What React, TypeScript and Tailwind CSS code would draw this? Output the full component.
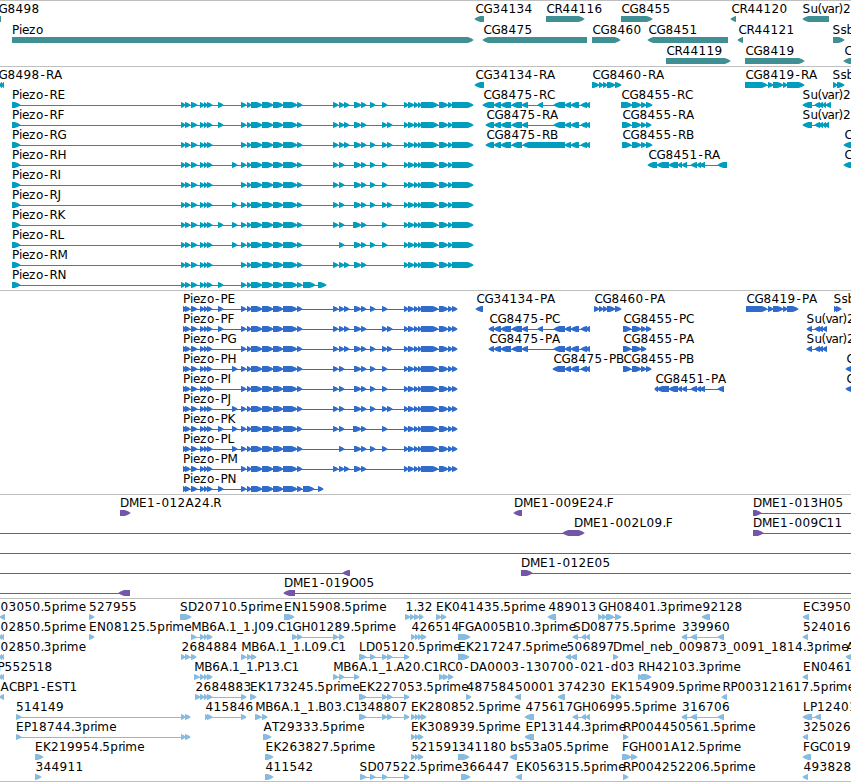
import React from "react";

type Dir = "r" | "l";
/** row, label, label x, direction, exon spans, optional connector span */
type Feature = [number, string, number, Dir, string, string?];

interface TrackData {
  color: string;
  height: string;
  pitch: number;
  features: Feature[];
}

// Horizontal advance of each character, in pixels, for the 12px label face.
const ADVANCE: Record<string, number> = {
  A: 8.5, B: 8, C: 8, D: 9, E: 8, F: 7, G: 9, H: 9, J: 4, I: 4, K: 8, L: 7, M: 10, N: 9, O: 9, P: 7,
  R: 8, S: 8, T: 7, a: 7, b: 8, d: 8, e: 7, i: 3, l: 3, m: 12, n: 8, o: 7, p: 8, r: 4, s: 6, u: 7,
  v: 6, z: 7, "(": 4, ")": 4.5, "-": 6.5, "_": 6, ".": 3.3,
};

function glyphPositions(text: string, x: number): string {
  let pos = x + 0.4;
  return text
    .split("")
    .map((ch) => {
      const here = pos;
      pos += ADVANCE[ch] ?? 8;
      return ch === "-" ? here + 1 : here;
    })
    .join(" ");
}

const parse = (spans: string): number[][] =>
  spans.split(" ").filter(Boolean).map((s) => s.split(":").map(Number));

// Block arrow six pixels high, with a slightly convex head.
function arrow(a: number, b: number, top: number, dir: Dir): string {
  const head = Math.min(b - a + 0.5, 6);
  const mid = top + 3;
  const bottom = top + 6;
  const sign = dir === "r" ? 1 : -1;
  const back = dir === "r" ? a : b;
  const tip = dir === "r" ? b + 0.8 : a - 0.8;
  const neck = tip - sign * head;
  const shoulder = tip - sign * head * 0.45;
  return `M${back} ${top}H${neck}L${shoulder} ${top + 1.3}L${tip} ${mid}L${shoulder} ${bottom - 1.3}L${neck} ${bottom}H${back}Z`;
}

function Glyph({ feature, pitch }: { feature: Feature; pitch: number }) {
  const [row, label, x, dir, spans, link] = feature;
  const top = row * pitch + 15;
  const exons = parse(spans);
  const connector = link
    ? parse(link)[0]
    : exons.length > 1
      ? [exons[0][0], exons[exons.length - 1][1]]
      : null;
  return (
    <g>
      {connector && (
        <rect x={connector[0]} y={top + 3} width={connector[1] - connector[0]} height={1} shapeRendering="crispEdges" />
      )}
      {exons.length > 0 && <path d={exons.map(([a, b]) => arrow(a, b, top, dir)).join("")} />}
      {label && (
        <text x={glyphPositions(label, x)} y={top - 3} className="fill-black">
          {label}
        </text>
      )}
    </g>
  );
}

function Track({ data }: { data: TrackData }) {
  return (
    <section className={`w-full shrink-0 overflow-hidden border-t border-[#bfbfbf] ${data.height}`}>
      <svg
        className={`block h-full w-full font-['DejaVu_Sans',sans-serif] text-[12px] ${data.color}`}
      >
        {data.features.map((f, i) => (
          <Glyph key={i} feature={f} pitch={data.pitch} />
        ))}
      </svg>
    </section>
  );
}

const genes: Feature[] = [
  [0, "CG8498", -10, "l", "-9:1"],
  [0, "CG34134", 475, "l", "475:484"],
  [0, "CR44116", 546, "r", "546:584"],
  [0, "CG8455", 621, "r", "621:652"],
  [0, "CR44120", 731, "l", "731:736"],
  [0, "Su(var)2", 802, "l", "803:829"],
  [1, "Piezo", 11.6, "r", "12:473"],
  [1, "CG8475", 483, "l", "483:587"],
  [1, "CG8460", 592, "r", "592:620"],
  [1, "CG8451", 648, "l", "648:728"],
  [1, "CR44121", 738, "l", "738:743"],
  [1, "Ssb", 832, "r", "833:844"],
  [2, "CR44119", 666, "r", "666:730"],
  [2, "CG8419", 745, "r", "745:804"],
  [2, "C", 844, "l", "844:860"],
];

// Exons shared by every Piezo isoform, then the alternative ones per isoform.
const FIRST = "191:197 200:204 204:207 207:212";
const CORE = "241:246 247:251 251:262 262:273 273:283 283:297 297:302";
const TAIL = "404:408 408:414 414:418 418:421 421:438 439:448 448:452";
const isoforms: [string, string, string][] = [
  ["E", "218:223", "333:338 339:344 344:349 354:361 361:366 370:375 382:387"],
  ["F", "218:223", "333:338 339:344 344:349 354:361 361:366 382:387 387:392"],
  ["G", "", "333:338 339:344 344:349 354:361 361:366 370:375 382:387 387:392"],
  ["H", "232:237", "333:338 339:344 354:361 361:366 370:375 382:387"],
  ["I", "", "333:338 339:344 354:361 361:366 370:375 382:387"],
  ["J", "232:237", "333:338 339:344 354:361 361:366 370:375 382:387 387:392"],
  ["K", "218:223 232:237", "333:338 339:344 353:361 361:366 382:387"],
  ["L", "232:237", "339:344 354:361 361:366 370:375 382:387"],
  ["M", "", "333:338 339:344 344:349 354:361 361:366"],
];

const piezoR: Feature[] = isoforms.map(([n, a, b], i) => [
  i + 1, `Piezo-R${n}`, 11.6, "r", `12:20 181:185 185:190 ${FIRST} ${a} ${CORE} ${b} ${TAIL} 452:473`,
]);
const piezoP: Feature[] = isoforms.map(([n, a, b], i) => [
  i, `Piezo-P${n}`, 182.6, "r", `183:186 185:190 ${FIRST} ${a} ${CORE} ${b} ${TAIL} 452:457`,
]);

const C8475 = "494:501 501:511 512:522";
const C8475_END = "565:571 571:579 581:587 586:590";
const C8451 = "657:669 669:678 678:682 682:687 691:697 697:701 700:705";

const transcripts: Feature[] = [
  [0, "CG8498-RA", -10, "l", "0:2 2:4"],
  [0, "CG34134-RA", 475, "l", "475:484"],
  [0, "CG8460-RA", 592, "r", "592:599 599:603 603:607 607:615 615:621"],
  [0, "CG8419-RA", 745, "r", "745:767 768:773 773:783 783:787 787:804"],
  [0, "Ssb", 832, "r", "833:837 837:844"],
  ...piezoR,
  [10, "Piezo-RN", 11.6, "r", `12:20 181:185 185:190 ${FIRST} 218:223 ${CORE} 303:315 318:326`],
  [1, "CG8475-RC", 483, "l", `483:494 ${C8475} 522:528 538:543 554:565 ${C8475_END}`],
  [2, "CG8475-RA", 486, "l", `486:494 ${C8475} 522:528 554:565 ${C8475_END}`],
  [3, "CG8475-RB", 486, "l", `486:494 ${C8475} 523:565 ${C8475_END}`],
  [1, "CG8455-RC", 621, "r", "621:632 632:641 641:646 646:652"],
  [2, "CG8455-RA", 622, "r", "622:631 632:641 641:646 646:651"],
  [3, "CG8455-RB", 622, "r", "622:631 632:641 641:646 646:652"],
  [4, "CG8451-RA", 648, "l", `648:657 ${C8451} 718:727`],
  [1, "Su(var)2", 802, "l", "803:812 815:820 819:823 823:826 826:831"],
  [2, "Su(var)2", 802, "l", "803:812 815:820 819:823 823:826 825:829"],
  [3, "C", 844, "l", "844:860"],
  [4, "C", 844, "l", "844:860"],
];

const proteins: Feature[] = [
  ...piezoP,
  [9, "Piezo-PN", 182.6, "r", `183:186 185:190 ${FIRST} 218:223 ${CORE} 303:314 318:323`],
  [0, "CG34134-PA", 476, "l", "476:483"],
  [0, "CG8460-PA", 594, "r", "594:599 599:603 603:607 607:615 615:621"],
  [0, "CG8419-PA", 746, "r", "746:767 768:773 773:783 783:787 787:798"],
  [0, "Ssb", 833, "r", "834:837 836:841"],
  [1, "CG8475-PC", 489, "l", `489:494 ${C8475} 522:528 538:543 554:565 ${C8475_END}`],
  [2, "CG8475-PA", 489, "l", `489:494 ${C8475} 522:528 554:565 ${C8475_END}`],
  [3, "CG8475-PB", 553, "l", `553:565 ${C8475_END}`],
  [1, "CG8455-PC", 623, "r", "623:631 632:641 641:646 646:651"],
  [2, "CG8455-PA", 623, "r", "623:631 632:641 641:646"],
  [3, "CG8455-PB", 623, "r", "623:631 632:641 641:646 646:651"],
  [4, "CG8451-PA", 655, "l", `655:658 ${C8451} 718:724`],
  [1, "Su(var)2", 806, "l", "807:812 815:820 819:823 823:827"],
  [2, "Su(var)2", 806, "l", "807:812 815:820 819:823 823:827"],
  [3, "C", 846, "l", "846:860"],
  [4, "C", 846, "l", "846:860"],
];

const clones: Feature[] = [
  [0, "DME1-012A24.R", 119.6, "r", "120:130"],
  [0, "DME1-009E24.F", 513.6, "l", "514:522"],
  [0, "DME1-013H05", 752.6, "r", "753:761", "753:851"],
  [1, "DME1-002L09.F", 573.6, "r", "573:584"],
  [1, "", 0, "l", "563:573", "0:573"],
  [1, "DME1-009C11", 752.6, "r", "753:763", "753:851"],
  [2, "", 0, "r", "", "0:851"],
  [3, "", 0, "l", "343:350", "0:350"],
  [3, "DME1-012E05", 520.6, "r", "521:532", "521:851"],
  [4, "", 0, "l", "119:130", "0:130"],
  [4, "DME1-019O05", 283.6, "l", "284:295", "284:851"],
];

const DOUBLE_END = "181:185 185:190";
const TRIPLE = "200:204 204:207 207:212";
const QUAD = "411:415 415:418 418:421 421:426";
const LONG = "359:366 382:387 387:392 404:409";

const ests: Feature[] = [
  [0, "03050.5prime", 0, "l", "0:5"],
  [0, "527955", 88.5, "r", "89:94"],
  [0, "SD20710.5prime", 179.5, "r", "180:191"],
  [0, "EN15908.5prime", 283.5, "r", "284:294"],
  [0, "1.32", 405, "r", "405:410 410:414 414:419 419:423"],
  [0, "EK041435.5prime", 435.5, "r", "436:441 441:446"],
  [0, "489013", 548, "l", "548:556"],
  [0, "GH08401.3prime", 598, "r", "598:602 602:606 606:614 615:621"],
  [0, "92128", 702, "l", "702:710"],
  [0, "EC3950", 802.5, "l", "803:809"],
  [1, "02850.5prime", 0, "l", "0:2 2:4"],
  [1, "EN08125.5prime", 88.5, "r", "89:94"],
  [1, "MB6A.1_1.J09.C1", 190.8, "r", `191:196 ${TRIPLE}`],
  [1, "GH01289.5prime", 292, "r", "292:297 297:302 333:338 339:344"],
  [1, "426514", 411, "r", QUAD],
  [1, "FGA005B10.3prime", 457.5, "r", "458:470"],
  [1, "SD08775.5prime", 572.5, "l", "573:578 582:586 586:590"],
  [1, "339960", 681.5, "l", "682:687 691:697 718:724"],
  [1, "524016", 802.5, "l", "803:808"],
  [2, "02850.3prime", 0, "l", "0:2 2:4"],
  [2, "2684884", 181, "r", `${DOUBLE_END} 191:196`],
  [2, "MB6A.1_1.L09.C1", 240.8, "r", "241:246 247:251 251:256"],
  [2, "LD05120.5prime", 358.5, "r", "359:366 370:375 382:387 387:392 404:409"],
  [2, "EK217247.5prime", 457.5, "r", "458:469"],
  [2, "506897", 566, "l", "566:571 571:577"],
  [2, "Dmel_neb_009873_0091_1814.3prime", 612.5, "r", "613:618"],
  [2, "A", 845.8, "l", "846:853"],
  [3, "P552518", -3, "l", "0:2 2:4"],
  [3, "MB6A.1_1.P13.C1", 193.8, "r", `194:199 ${TRIPLE}`],
  [3, "MB6A.1_1.A20.C1", 332.8, "r", "333:338 339:344 354:359"],
  [3, "RC0-DA0003-130700-021-d03", 438.8, "r", "439:444 443:448 448:453"],
  [3, "RH42103.3prime", 637.8, "r", "638:643 641:651"],
  [3, "EN0461", 802.5, "l", "803:808"],
  [4, "ACBP1-EST1", 0, "l", "0:4"],
  [4, "2684883", 195, "r", "195:200 200:204 204:207 207:212 241:246"],
  [4, "EK173245.5prime", 249.5, "r", "250:256"],
  [4, "EK227053.5prime", 358.5, "r", LONG],
  [4, "487584", 466, "r", "466:471"],
  [4, "50001", 514.5, "l", "515:521"],
  [4, "374230", 557, "l", "558:565"],
  [4, "EK154909.5prime", 610.5, "r", "611:616 616:621"],
  [4, "RP003121617.5prime", 722, "l", "722:727"],
  [5, "514149", 15.5, "r", `16:21 ${DOUBLE_END}`],
  [5, "415846", 205, "r", "205:208 207:212 241:246"],
  [5, "MB6A.1_1.B03.C1", 254.8, "r", "255:261 262:267"],
  [5, "348807", 359, "r", LONG],
  [5, "EK280852.5prime", 410.5, "r", QUAD],
  [5, "475617", 525, "l", "525:534"],
  [5, "GH06995.5prime", 572.5, "l", "573:578 582:586 586:590"],
  [5, "316706", 681.5, "l", "682:687 691:697 718:724"],
  [5, "LP12401", 802.5, "l", "803:812 815:821"],
  [6, "EP18744.3prime", 15.5, "r", `16:21 ${DOUBLE_END}`],
  [6, "AT29333.5prime", 263, "r", "263:271"],
  [6, "EK308939.5prime", 410.5, "r", "411:415 415:418 418:423"],
  [6, "EP13144.3prime", 525, "l", "525:534"],
  [6, "RP004450561.5prime", 622.5, "r", "623:628"],
  [6, "325026", 802.5, "l", "803:808"],
  [7, "EK219954.5prime", 34.5, "r", "35:43"],
  [7, "EK263827.5prime", 265, "r", "265:273"],
  [7, "521591", 411, "r", "411:415 415:418 418:423"],
  [7, "341180", 458, "r", "458:469"],
  [7, "bs53a05.5prime", 509.5, "l", "510:517"],
  [7, "FGH001A12.5prime", 621.5, "r", "622:631 631:637"],
  [7, "FGC019", 802.5, "l", "803:811"],
  [8, "344911", 35, "r", "35:41"],
  [8, "411542", 265, "r", "265:273"],
  [8, "SD07522.5prime", 359, "r", "360:366 370:375 382:387 404:409"],
  [8, "366447", 461, "r", "461:470"],
  [8, "EK056315.5prime", 515.5, "l", "516:522"],
  [8, "RP004252206.5prime", 622.5, "r", "623:628"],
  [8, "493828", 803, "l", "803:808"],
];

const tracks: TrackData[] = [
  { color: "fill-[#3f8f94]", height: "h-[66px]", pitch: 21, features: genes },
  { color: "fill-[#009dbf]", height: "h-[224px]", pitch: 20, features: transcripts },
  { color: "fill-[#2f6bcb]", height: "h-[204px]", pitch: 20, features: proteins },
  { color: "fill-[#7356a8]", height: "h-[104px]", pitch: 20, features: clones },
  { color: "fill-[#87bbdf]", height: "h-[183px]", pitch: 20, features: ests },
];

export default function App() {
  return (
    <main className="flex h-[782px] w-[851px] flex-col overflow-hidden bg-white">
      {tracks.map((t, i) => (
        <Track key={i} data={t} />
      ))}
      <div className="h-px w-full shrink-0 bg-[#bfbfbf]" />
    </main>
  );
}
